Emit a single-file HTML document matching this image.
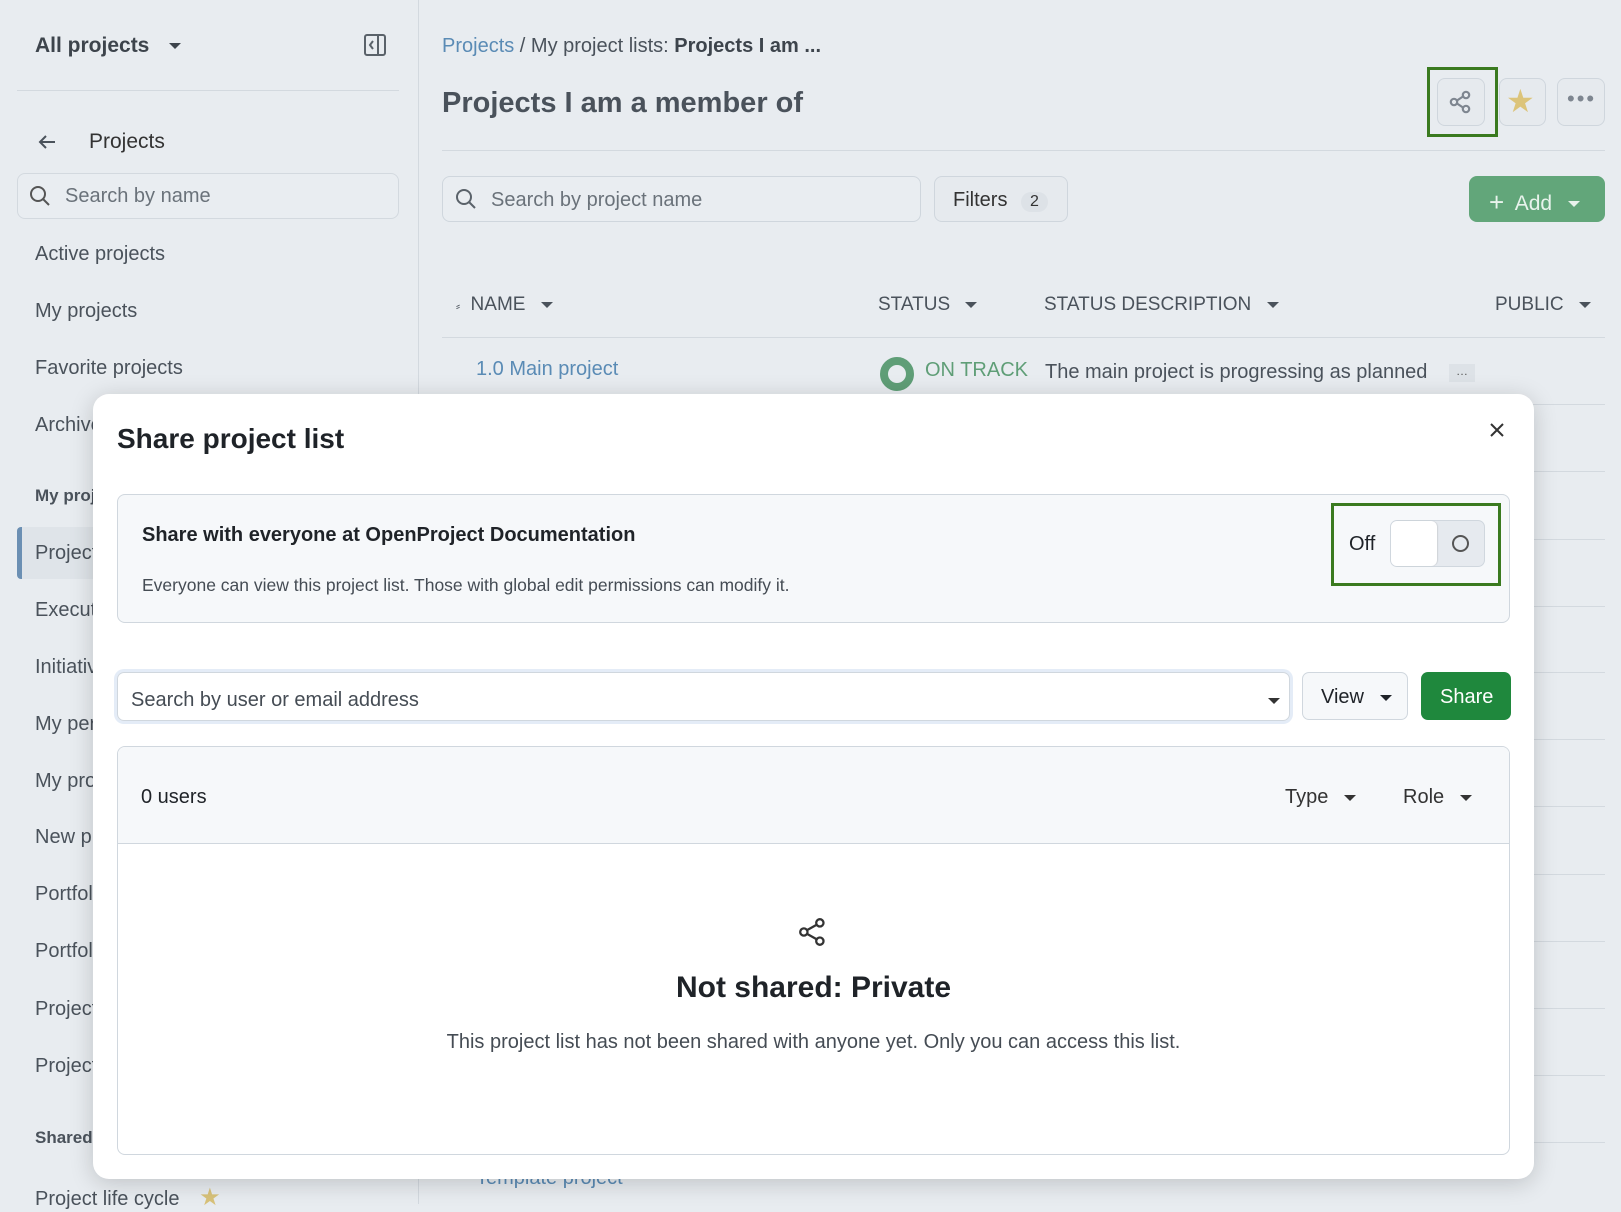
<!DOCTYPE html>
<html><head><meta charset="utf-8"><style>
*{box-sizing:border-box;margin:0;padding:0}
body{width:1621px;height:1204px;overflow:hidden;background:#e8ecf0;font-family:"Liberation Sans",sans-serif;color:#333b44;position:relative}
.a{position:absolute;white-space:nowrap}
.side{font-size:20px;color:#4a525b}
.line{position:absolute;height:1px;background:#d3d9df}
.btn{position:absolute;border:1px solid #cfd6dd;border-radius:8px;background:#e6eaee}
.c{display:inline-block;width:0;height:0;border-left:6px solid transparent;border-right:6px solid transparent;border-top:6px solid currentColor;vertical-align:middle;margin-left:10px}
</style></head><body>
<div class="a side" style="left:35px;top:34px;font-size:21px;font-weight:bold;color:#3d444c">All projects <span class="c" style="margin-left:14px"></span></div>
<svg class="a" style="left:363px;top:33px" width="24" height="24" viewBox="0 0 24 24" fill="none" stroke="#5a626a" stroke-width="2"><rect x="2" y="2" width="20" height="20" rx="2"/><line x1="15" y1="2" x2="15" y2="22"/><path d="M10 8l-3 4 3 4"/></svg>
<div class="line" style="left:17px;top:90px;width:382px"></div>
<svg class="a" style="left:37px;top:132px" width="20" height="20" viewBox="0 0 20 20" fill="none" stroke="#4a525b" stroke-width="2"><path d="M18 10H3M9 4l-6 6 6 6"/></svg>
<div class="a side" style="left:89px;top:130px;font-size:21px;color:#333">Projects</div>
<div class="a" style="left:17px;top:173px;width:382px;height:46px;border:1px solid #d3d9df;border-radius:8px;background:#e9edf1"></div>
<svg class="a" style="left:28px;top:184px" width="24" height="24" viewBox="0 0 24 24" fill="none" stroke="#555" stroke-width="2"><circle cx="10" cy="10" r="7"/><line x1="15" y1="15" x2="21" y2="21"/></svg>
<div class="a side" style="left:65px;top:185px;color:#6a727a">Search by name</div>
<div class="a side" style="left:35px;top:243px">Active projects</div>
<div class="a side" style="left:35px;top:300px">My projects</div>
<div class="a side" style="left:35px;top:357px">Favorite projects</div>
<div class="a side" style="left:35px;top:414px">Archived projects</div>
<div class="a side" style="left:35px;top:486px;font-size:17px;font-weight:bold">My project lists</div>
<div class="a" style="left:17px;top:527px;width:382px;height:52px;background:#dfe4e9;border-left:5px solid #6b8fb3;border-radius:4px"></div>
<div class="a side" style="left:35px;top:542px">Projects I am a member of</div>
<div class="a side" style="left:35px;top:599px">Executive projects</div>
<div class="a side" style="left:35px;top:656px">Initiatives</div>
<div class="a side" style="left:35px;top:713px">My personal list</div>
<div class="a side" style="left:35px;top:770px">My projects</div>
<div class="a side" style="left:35px;top:826px">New projects</div>
<div class="a side" style="left:35px;top:883px">Portfolio</div>
<div class="a side" style="left:35px;top:940px">Portfolio 2</div>
<div class="a side" style="left:35px;top:998px">Projects list</div>
<div class="a side" style="left:35px;top:1055px">Projects overview</div>
<div class="a side" style="left:35px;top:1128px;font-size:17px;font-weight:bold">Shared project lists</div>
<div class="a side" style="left:35px;top:1183px">Project life cycle <span style="color:#d8c27a;margin-left:14px;font-size:24px">★</span></div>
<div class="a" style="left:418px;top:0;width:1px;height:1204px;background:#d3d9df"></div>
<div class="a" style="left:442px;top:35px;font-size:20px;color:#4a525b"><span style="color:#5a8bb5">Projects</span> / My project lists: <b style="color:#3d444c">Projects I am ...</b></div>
<div class="a" style="left:442px;top:87px;font-size:29px;font-weight:bold;color:#4a525b">Projects I am a member of</div>
<div class="btn" style="left:1437px;top:78px;width:48px;height:48px"></div>
<svg class="a" style="left:1447px;top:88px" width="28" height="28" viewBox="0 0 28 28" fill="none" stroke="#7e8690" stroke-width="2.2"><circle cx="19" cy="7" r="3.2"/><circle cx="7" cy="14" r="3.2"/><circle cx="19" cy="21" r="3.2"/><path d="M10 12.5l6-4M10 15.5l6 4"/></svg>
<div class="a" style="left:1427px;top:67px;width:71px;height:70px;border:3px solid #3a7a1f"></div>
<div class="btn" style="left:1499px;top:78px;width:47px;height:48px"></div>
<div class="a" style="left:1506px;top:82px;font-size:32px;color:#dcc47a">★</div>
<div class="btn" style="left:1557px;top:78px;width:48px;height:48px"></div>
<div class="a" style="left:1567px;top:86px;font-size:22px;color:#7e8690;letter-spacing:2px">•••</div>
<div class="line" style="left:442px;top:150px;width:1163px"></div>
<div class="a" style="left:442px;top:176px;width:479px;height:46px;border:1px solid #cfd6dd;border-radius:8px;background:#e9edf1"></div>
<svg class="a" style="left:454px;top:187px" width="24" height="24" viewBox="0 0 24 24" fill="none" stroke="#5a626a" stroke-width="2"><circle cx="10" cy="10" r="7"/><line x1="15" y1="15" x2="21" y2="21"/></svg>
<div class="a side" style="left:491px;top:189px;color:#6a727a">Search by project name</div>
<div class="btn" style="left:934px;top:176px;width:134px;height:46px"></div>
<div class="a side" style="left:953px;top:189px;color:#333">Filters <span style="display:inline-block;background:#dde2e7;border-radius:12px;padding:1px 9px;margin-left:8px;font-size:16px">2</span></div>
<div class="a" style="left:1469px;top:176px;width:136px;height:46px;background:#62a67a;border-radius:8px;color:#e8f3ec;font-size:21px;padding:10px 0 0 20px"><span style="font-size:26px;position:relative;top:1px">+</span>&nbsp; Add <span class="c"></span></div>
<div class="a side" style="left:456px;top:294px;font-size:19px;color:#4a525b"><span style="font-size:12px">⸗</span>&nbsp; NAME <span class="c"></span></div>
<div class="a side" style="left:878px;top:294px;font-size:19px">STATUS <span class="c"></span></div>
<div class="a side" style="left:1044px;top:294px;font-size:19px">STATUS DESCRIPTION <span class="c"></span></div>
<div class="a side" style="left:1495px;top:294px;font-size:19px">PUBLIC <span class="c"></span></div>
<div class="line" style="left:442px;top:337px;width:1163px"></div>
<div class="a side" style="left:476px;top:358px;color:#5a8bb5">1.0 Main project</div>
<div class="a" style="left:880px;top:357px;width:34px;height:34px;border-radius:50%;border:8px solid #5f9e77"></div>
<div class="a" style="left:925px;top:359px;font-size:20px;color:#5f9e77">ON TRACK</div>
<div class="a side" style="left:1045px;top:361px;width:390px;overflow:hidden">The main project is progressing as planned</div>
<div class="a" style="left:1449px;top:364px;width:26px;height:18px;background:#dde2e7;font-size:12px;text-align:center;color:#555">…</div>
<div class="line" style="left:442px;top:404px;width:1163px"></div>
<div class="line" style="left:442px;top:471px;width:1163px"></div>
<div class="line" style="left:442px;top:539px;width:1163px"></div>
<div class="line" style="left:442px;top:606px;width:1163px"></div>
<div class="line" style="left:442px;top:672px;width:1163px"></div>
<div class="line" style="left:442px;top:739px;width:1163px"></div>
<div class="line" style="left:442px;top:806px;width:1163px"></div>
<div class="line" style="left:442px;top:874px;width:1163px"></div>
<div class="line" style="left:442px;top:941px;width:1163px"></div>
<div class="line" style="left:442px;top:1008px;width:1163px"></div>
<div class="line" style="left:442px;top:1075px;width:1163px"></div>
<div class="line" style="left:442px;top:1142px;width:1163px"></div>
<div class="a side" style="left:476px;top:1167px;color:#5a8bb5">Template project</div>
<div class="a" style="left:93px;top:394px;width:1441px;height:785px;background:#fff;border-radius:16px;box-shadow:0 4px 24px rgba(0,0,0,0.18)"></div>
<div class="a" style="left:117px;top:423px;font-size:28px;font-weight:bold;color:#1f2328">Share project list</div>
<svg class="a" style="left:1489px;top:422px" width="16" height="16" viewBox="0 0 16 16" stroke="#333" stroke-width="2"><path d="M2 2l12 12M14 2L2 14"/></svg>
<div class="a" style="left:117px;top:494px;width:1393px;height:129px;background:#f6f8fa;border:1px solid #d0d7de;border-radius:8px"></div>
<div class="a" style="left:142px;top:524px;font-size:20px;font-weight:bold;color:#1f2328">Share with everyone at OpenProject Documentation</div>
<div class="a" style="left:142px;top:575px;font-size:17.5px;color:#454c54">Everyone can view this project list. Those with global edit permissions can modify it.</div>
<div class="a" style="left:1331px;top:503px;width:170px;height:83px;border:3px solid #3a7a1f"></div>
<div class="a" style="left:1349px;top:533px;font-size:20px;color:#1f2328">Off</div>
<div class="a" style="left:1390px;top:520px;width:95px;height:47px;background:#e6eaef;border:1px solid #d0d7de;border-radius:7px"></div>
<div class="a" style="left:1391px;top:521px;width:46px;height:45px;background:#fff;border-radius:6px;box-shadow:1px 0 1px rgba(0,0,0,0.1)"></div>
<div class="a" style="left:1452px;top:535px;width:17px;height:17px;border:2px solid #555;border-radius:50%"></div>
<div class="a" style="left:117px;top:672px;width:1173px;height:49px;border:1px solid #d0d7de;border-radius:7px;box-shadow:0 0 0 3px #e4ecf7"></div>
<div class="a" style="left:131px;top:689px;font-size:20px;color:#454c54">Search by user or email address</div>
<div class="a" style="left:1258px;top:689px;font-size:20px;color:#333"><span class="c"></span></div>
<div class="a" style="left:1302px;top:672px;width:106px;height:48px;border:1px solid #d0d7de;border-radius:7px;background:#f6f8fa;font-size:20px;padding:13px 0 0 18px;color:#1f2328">View <span class="c"></span></div>
<div class="a" style="left:1421px;top:672px;width:90px;height:48px;background:#1f883d;border-radius:7px;font-size:20px;color:#fff;padding:14px 0 0 19px">Share</div>
<div class="a" style="left:117px;top:746px;width:1393px;height:409px;border:1px solid #d0d7de;border-radius:8px;overflow:hidden">
<div style="height:97px;background:#f6f8fa;border-bottom:1px solid #d0d7de"></div></div>
<div class="a" style="left:141px;top:786px;font-size:20px;color:#1f2328">0 users</div>
<div class="a" style="left:1285px;top:786px;font-size:20px;color:#333">Type <span class="c"></span></div>
<div class="a" style="left:1403px;top:786px;font-size:20px;color:#333">Role <span class="c"></span></div>
<svg class="a" style="left:797px;top:916px" width="32" height="32" viewBox="0 0 28 28" fill="none" stroke="#333" stroke-width="2"><circle cx="20" cy="6" r="3.2"/><circle cx="6" cy="14" r="3.2"/><circle cx="20" cy="22" r="3.2"/><path d="M9 12.3l8-4.5M9 15.7l8 4.5"/></svg>
<div class="a" style="left:0;width:1627px;top:971px;text-align:center;font-size:30px;font-weight:bold;color:#1f2328">Not shared: Private</div>
<div class="a" style="left:0;width:1627px;top:1031px;text-align:center;font-size:20px;color:#454c54">This project list has not been shared with anyone yet. Only you can access this list.</div>
</body></html>
